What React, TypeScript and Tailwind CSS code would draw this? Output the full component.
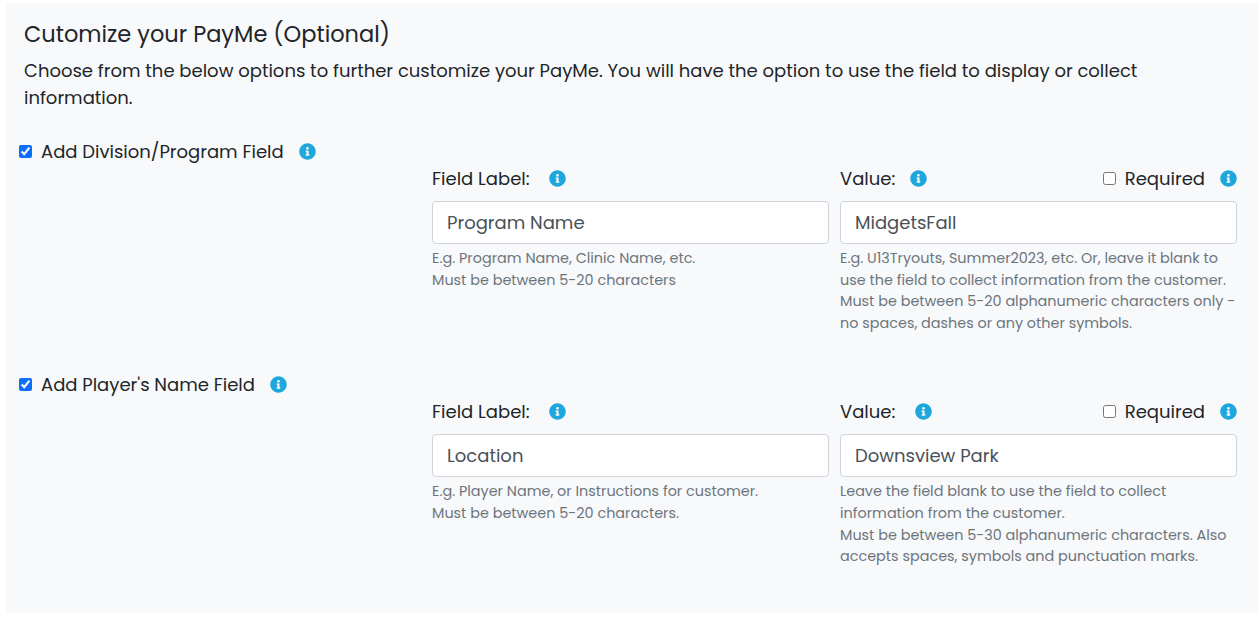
import { FaInfoCircle } from "react-icons/fa";

function Info() {
  return <FaInfoCircle className="text-[17px] text-[#1ea7dc] shrink-0" />;
}

function Field({
  label,
  gap,
  value,
  hints,
  required,
}: {
  label: string;
  gap: string;
  value: string;
  hints: string[];
  required?: boolean;
}) {
  return (
    <div className="w-[397px]">
      <div className="flex items-center h-[24px] text-[18px] text-[#212529]">
        <span>{label}</span>
        <span className={gap}>
          <Info />
        </span>
        {required && (
          <label className="ml-auto flex items-center">
            <input type="checkbox" className="w-[13px] h-[13px] m-0 accent-[#0d6efd]" />
            <span className="ml-[9px]">Required</span>
            <span className="ml-[15px]">
              <Info />
            </span>
          </label>
        )}
      </div>
      <input
        readOnly
        value={value}
        className="mt-[11px] block w-full h-[43px] px-[14px] rounded-[4px] border border-[#ced4da] bg-white text-[18px] text-[#495057] outline-none"
      />
      <div className="mt-[4px] text-[14.4px] leading-[21.6px] text-[#6c757d]">
        {hints.map((h) => (
          <div key={h}>{h}</div>
        ))}
      </div>
    </div>
  );
}

function Section({
  title,
  children,
}: {
  title: string;
  children: React.ReactNode;
}) {
  return (
    <div>
      <label className="flex items-center h-[24px] text-[18px] text-[#212529] pl-[13px]">
        <input type="checkbox" defaultChecked className="w-[13px] h-[13px] m-0 accent-[#0d6efd]" />
        <span className="ml-[9px]">{title}</span>
        <span className="ml-[15px]">
          <Info />
        </span>
      </label>
      <div className="flex gap-[11px] pl-[426px] mt-[3px]">{children}</div>
    </div>
  );
}

export default function App() {
  return (
    <div className="bg-white pt-[3px] pl-[6px] h-[619px] font-['Poppins','Inter',sans-serif]">
      <div className="bg-[#f8f9fa] h-[610px] overflow-hidden">
        <div className="pl-[18px] pr-[100px] pt-[16px]">
          <h1 className="text-[22.5px] leading-[30px] text-[#212529]">Cutomize your PayMe (Optional)</h1>
          <p className="mt-[8px] text-[18px] leading-[27px] text-[#212529]">
            Choose from the below options to further customize your PayMe. You will have the option to use the field to display or collect information.
          </p>
        </div>
        <div className="mt-[28px]">
          <Section title="Add Division/Program Field">
            <Field
              label="Field Label:"
              gap="ml-[19px]"
              value="Program Name"
              hints={["E.g. Program Name, Clinic Name, etc.", "Must be between 5-20 characters"]}
            />
            <Field
              label="Value:"
              gap="ml-[15px]"
              value="MidgetsFall"
              required
              hints={[
                "E.g. U13Tryouts, Summer2023, etc. Or, leave it blank to",
                "use the field to collect information from the customer.",
                "Must be between 5-20 alphanumeric characters only -",
                "no spaces, dashes or any other symbols.",
              ]}
            />
          </Section>
        </div>
        <div className="mt-[38px]">
          <Section title="Add Player's Name Field">
            <Field
              label="Field Label:"
              gap="ml-[19px]"
              value="Location"
              hints={["E.g. Player Name, or Instructions for customer.", "Must be between 5-20 characters."]}
            />
            <Field
              label="Value:"
              gap="ml-[20px]"
              value="Downsview Park"
              required
              hints={[
                "Leave the field blank to use the field to collect",
                "information from the customer.",
                "Must be between 5-30 alphanumeric characters. Also",
                "accepts spaces, symbols and punctuation marks.",
              ]}
            />
          </Section>
        </div>
      </div>
    </div>
  );
}
